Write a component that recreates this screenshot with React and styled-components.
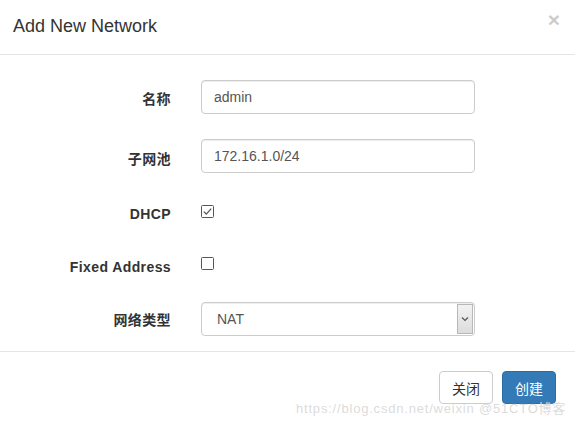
import React from "react";
import styled, { createGlobalStyle } from "styled-components";

const GlobalStyle = createGlobalStyle`
  html, body {
    margin: 0;
    padding: 0;
    background: #ffffff;
  }
  body {
    font-family: "Liberation Sans", Arial, "Noto Sans CJK SC", sans-serif;
    font-size: 14px;
    color: #333333;
  }
  * { box-sizing: border-box; }
`;

const Modal = styled.div`
  position: relative;
  width: 575px;
  min-height: 424px;
  background: #ffffff;
  display: flex;
  flex-direction: column;
  overflow: hidden;
`;

const Header = styled.div`
  height: 55px;
  border-bottom: 1px solid #e5e5e5;
  display: flex;
  justify-content: space-between;
  align-items: flex-start;
  padding: 0 15px 0 13px;
`;

const Title = styled.h4`
  margin: 13px 0 0;
  font-family: "Liberation Sans", Arial, sans-serif;
  font-size: 18px;
  font-weight: normal;
  line-height: 26px;
  color: #333333;
`;

const Close = styled.button`
  margin-top: 9px;
  padding: 0;
  border: 0;
  background: transparent;
  font-family: "Liberation Sans", Arial, sans-serif;
  font-size: 21px;
  font-weight: bold;
  line-height: 21px;
  color: #000;
  opacity: 0.2;
  cursor: pointer;
`;

const Body = styled.div`
  padding: 25px 0 15px;
  display: flex;
  flex-direction: column;
`;

const FormRow = styled.div`
  display: flex;
  align-items: center;
  gap: 30px;
  height: 34px;
  margin-top: ${(p) => p.$mt || 0}px;
`;

const Label = styled.label`
  width: 171px;
  text-align: right;
  font-family: "Liberation Sans", Arial, "Noto Sans CJK SC", sans-serif;
  font-weight: bold;
  font-size: 14px;
  letter-spacing: 0.4px;
  color: #333333;
  padding-top: ${(p) => p.$pt || 0}px;
`;

const Input = styled.input`
  width: 274px;
  height: 34px;
  padding: 6px 12px;
  border: 1px solid #cccccc;
  border-radius: 4px;
  box-shadow: inset 0 1px 1px rgba(0, 0, 0, 0.075);
  font-family: "Liberation Sans", Arial, sans-serif;
  font-size: 14px;
  color: #555555;
  outline: none;
`;

const CheckWrap = styled.span`
  align-self: flex-start;
  margin-top: ${(p) => p.$top}px;
  width: 13px;
  height: 13px;
  display: inline-flex;
`;

const SelectBox = styled.div`
  width: 274px;
  height: 34px;
  border: 1px solid #cccccc;
  border-radius: 4px;
  box-shadow: inset 0 1px 1px rgba(0, 0, 0, 0.075);
  display: flex;
  align-items: stretch;
  padding: 1px 1px 1px 0;
`;

const SelectValue = styled.span`
  flex: 1;
  display: flex;
  align-items: center;
  padding-left: 15px;
  font-family: "Liberation Sans", Arial, sans-serif;
  font-size: 14px;
  color: #555555;
`;

const ArrowButton = styled.span`
  width: 16px;
  border: 1px solid #b8b8b8;
  background: linear-gradient(#f2f2f2, #dcdcdc);
  display: flex;
  align-items: center;
  justify-content: center;
`;

const Footer = styled.div`
  border-top: 1px solid #e5e5e5;
  padding: 19px 19px 0;
  display: flex;
  justify-content: flex-end;
  gap: 9px;
`;

const Button = styled.button`
  width: 54px;
  height: 33px;
  padding: 0;
  border-radius: 4px;
  border: 1px solid ${(p) => (p.$primary ? "#2e6da4" : "#cccccc")};
  background: ${(p) => (p.$primary ? "#337ab7" : "#ffffff")};
  color: ${(p) => (p.$primary ? "#ffffff" : "#333333")};
  font-family: "Liberation Sans", Arial, "Noto Sans CJK SC", sans-serif;
  font-size: 14px;
  cursor: pointer;
`;

const Watermark = styled.div`
  position: absolute;
  left: 296px;
  top: 398px;
  font-family: "Liberation Sans", Arial, "Noto Sans CJK SC", sans-serif;
  font-size: 13px;
  letter-spacing: 0.8px;
  color: rgba(195, 195, 195, 0.6);
  text-shadow: 0 0 1px rgba(255, 255, 255, 0.9);
  white-space: nowrap;
  pointer-events: none;
`;

function Checkbox({ checked, top }) {
  return (
    <CheckWrap $top={top}>
      <svg width="13" height="13" viewBox="0 0 13 13">
        <rect x="0.5" y="0.5" width="12" height="12" rx="1" fill="#fff" stroke="#555" strokeWidth="1" />
        {checked && (
          <path d="M2.8 6.6 L5.3 9.1 L10.2 3.6" fill="none" stroke="#555" strokeWidth="1.3" />
        )}
      </svg>
    </CheckWrap>
  );
}

export default function App() {
  return (
    <>
      <GlobalStyle />
      <Modal>
        <Header>
          <Title>Add New Network</Title>
          <Close aria-label="Close">×</Close>
        </Header>
        <Body>
          <FormRow>
            <Label $pt={2}>名称</Label>
            <Input defaultValue="admin" />
          </FormRow>
          <FormRow $mt={25}>
            <Label $pt={3}>子网池</Label>
            <Input defaultValue="172.16.1.0/24" />
          </FormRow>
          <FormRow $mt={24}>
            <Label>DHCP</Label>
            <Checkbox checked top={8} />
          </FormRow>
          <FormRow $mt={19}>
            <Label>Fixed Address</Label>
            <Checkbox top={7} />
          </FormRow>
          <FormRow $mt={18}>
            <Label>网络类型</Label>
            <SelectBox>
              <SelectValue>NAT</SelectValue>
              <ArrowButton>
                <svg width="10" height="8" viewBox="0 0 10 8">
                  <path d="M2 2.5 L5 5.5 L8 2.5" fill="none" stroke="#555" strokeWidth="1.2" />
                </svg>
              </ArrowButton>
            </SelectBox>
          </FormRow>
        </Body>
        <Footer>
          <Button>关闭</Button>
          <Button $primary>创建</Button>
        </Footer>
        <Watermark>https://blog.csdn.net/weixin @51CTO博客</Watermark>
      </Modal>
    </>
  );
}
